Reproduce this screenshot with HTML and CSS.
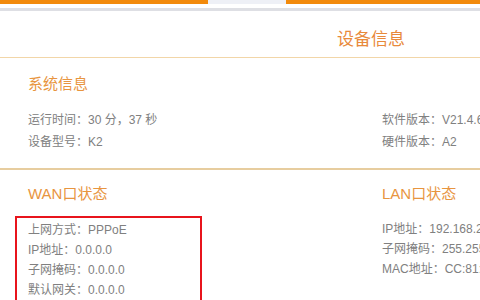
FILE: index.html
```html
<!DOCTYPE html>
<html lang="zh-CN">
<head>
  <meta charset="UTF-8">
  <meta name="viewport" content="width=device-width, initial-scale=1">
  <title>设备信息</title>
  <link rel="stylesheet" href="styles.css">
</head>
<body>
  <div class="topbar">
    <div class="bar"></div>
    <div class="tab"></div>
    <div class="bar grow"></div>
  </div>
  <div class="shadow"></div>

  <h2 class="title">设备信息</h2>

  <div class="section thin">
    <h3>系统信息</h3>
    <div class="cols">
      <div class="col">
        <p>运行时间：30 分，37 秒</p>
        <p>设备型号：K2</p>
      </div>
      <div class="col">
        <p>软件版本：V21.4.6</p>
        <p>硬件版本：A2</p>
      </div>
    </div>
  </div>

  <div class="section thick">
    <div class="cols">
      <div class="col">
        <h3>WAN口状态</h3>
        <div class="marked">
          <p>上网方式：PPPoE</p>
          <p>IP地址：0.0.0.0</p>
          <p>子网掩码：0.0.0.0</p>
          <p>默认网关：0.0.0.0</p>
        </div>
      </div>
      <div class="col">
        <h3>LAN口状态</h3>
        <div class="plain">
          <p>IP地址：192.168.2.1</p>
          <p>子网掩码：255.255.255.0</p>
          <p>MAC地址：CC:81:DA:00:00:00</p>
        </div>
      </div>
    </div>
  </div>
</body>
</html>
```

FILE: styles.css
```css
body {
  margin: 0;
  width: 480px;
  height: 300px;
  overflow: hidden;
  font-family: "Liberation Sans", "Noto Sans CJK TC", sans-serif;
  background: #fff;
  color: #808080;
}
.topbar {
  display: flex;
  height: 4px;
}
.bar {
  width: 208px;
  background: #f28a0c;
}
.bar.grow {
  flex: 1;
}
.tab {
  width: 78px;
  background: #eef0f6;
}
.shadow {
  height: 3px;
  margin-top: 4px;
  background: #dedfe4;
}
.title {
  margin: 0;
  height: 27px;
  padding: 19px 0 0 337px;
  line-height: 20px;
  font-size: 17px;
  font-weight: normal;
  color: #e8893a;
  border-bottom: 1px solid #f2d6a8;
}
.section {
  padding-left: 28px;
  white-space: nowrap;
  overflow: hidden;
}
.section.thin {
  padding-top: 16px;
  height: 94px;
  border-bottom: 2px solid #e7cd9f;
}
.section.thick {
  padding-top: 14px;
  height: 116px;
}
h3 {
  margin: 0;
  font-size: 15px;
  font-weight: normal;
  color: #e8953f;
  line-height: 20px;
}
.section.thin h3 {
  margin-bottom: 15px;
}
.cols {
  display: grid;
  grid-template-columns: 354px 1fr;
}
.col p {
  margin: 0;
  font-size: 12px;
  line-height: 22px;
}
.section.thick .col h3 {
  margin-bottom: 12px;
}
.marked {
  margin-left: -13px;
  width: 172px;
  height: 100px;
  padding: 2px 0 0 11px;
  border: 2px solid #e8141c;
  border-bottom: none;
}
.marked p,
.plain p {
  line-height: 20px;
}
.plain {
  padding-top: 3px;
}
```
